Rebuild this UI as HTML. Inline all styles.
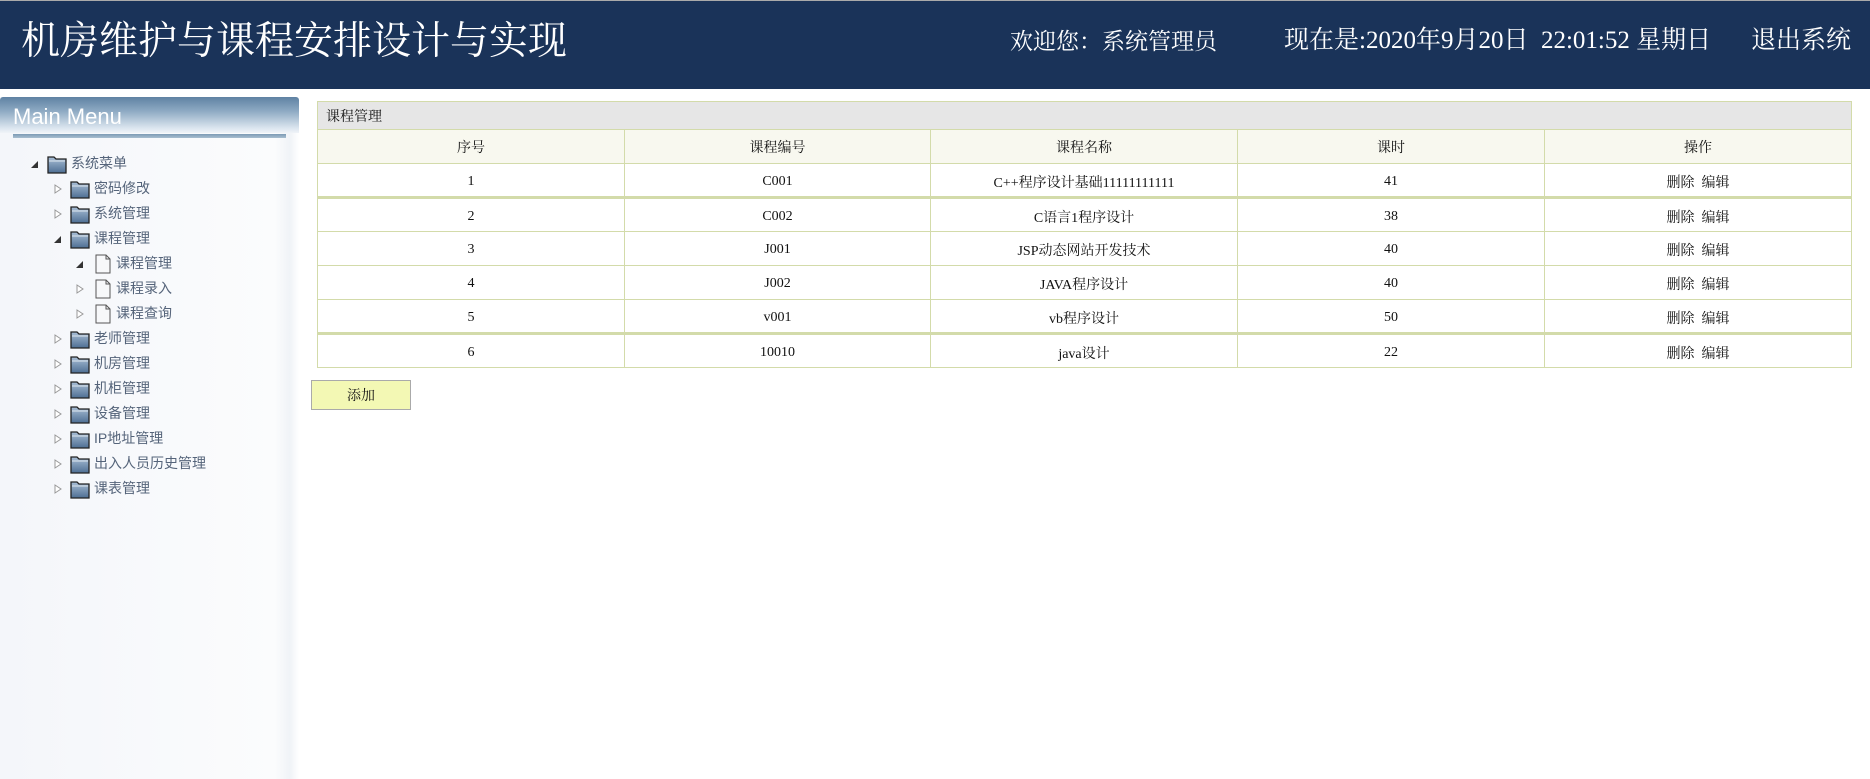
<!DOCTYPE html>
<html><head><meta charset="utf-8">
<style>
*{margin:0;padding:0;box-sizing:border-box}
body{width:1870px;height:779px;overflow:hidden;background:#fff;font-family:"Liberation Serif","Noto Serif CJK SC","Noto Sans CJK SC",serif;position:relative}
#hd{position:absolute;left:0;top:0;width:1870px;height:89px;background:#1a3359;border-top:1px solid #aaa}
#title{position:absolute;left:21px;top:17px;color:#fff;font-size:39px;line-height:48px;white-space:nowrap}
.hr{position:absolute;top:25px;color:#fff;font-size:25px;line-height:30px;white-space:nowrap}
#side{position:absolute;left:0;top:97px;width:299px;height:682px;background:linear-gradient(to right,#f4f6fa 0,#fbfcfd 275px,#f0f3f7 290px,#fff 299px)}
#mm{position:absolute;left:0;top:0;width:299px;height:36px;background:linear-gradient(#5f82a3,#8fabc4 40%,#d9e4ee 85%,#f0f4f8);border-radius:3px 3px 0 0}
#mm span{position:absolute;left:13px;top:7px;color:#fff;font-family:"Liberation Sans",sans-serif;font-size:22px;line-height:26px}
#mmline{position:absolute;left:13px;top:37px;width:273px;height:4px;background:linear-gradient(#7d9ab5,#a9bed0)}
.n{position:absolute;height:22px;font-family:"Liberation Sans","Noto Sans CJK SC",sans-serif;font-size:14px;color:#55647a;white-space:nowrap;line-height:22px}
.n svg{position:absolute;top:2px}
.n .t{position:absolute;top:0}
table{position:absolute;left:317px;top:101px;width:1535px;border-collapse:collapse;font-size:14px;color:#111}
td,th{border:1px solid #d3dbaa;text-align:center;font-weight:normal;height:34px;padding-top:3px}
th.cap{background:#e6e6e6;text-align:left;padding-left:8px;height:28px;padding-top:0}
tr.h td{background:#f8f8ef;padding-top:0}
tr.db td{border-top:3px solid #d3dbaa}
#btn{position:absolute;left:311px;top:380px;width:100px;height:30px;background:#f3f8b4;border:1px solid #aaa;text-align:center;font-size:14px;line-height:31px;color:#111}
</style></head><body>
<div id="hd">
<div id="title">机房维护与课程安排设计与实现</div>
<div class="hr" style="left:1010px;font-size:23px;top:26px">欢迎您：系统管理员</div>
<div class="hr" style="left:1284px">现在是:2020年9月20日&nbsp; 22:01:52 星期日</div>
<div class="hr" style="left:1751px">退出系统</div>
</div>
<div id="side">
<div id="mm"><span>Main Menu</span></div>
<div id="mmline"></div>
</div>
<svg width="0" height="0" style="position:absolute">
<defs>
<linearGradient id="fg" x1="0" y1="0" x2="0" y2="1"><stop offset="0" stop-color="#a9bfd6"/><stop offset="1" stop-color="#4e6f93"/></linearGradient>
<symbol id="fold" viewBox="0 0 20 20"><path d="M1 3h6l2 2h10v14H1z" fill="url(#fg)" stroke="#222" stroke-width="1.3"/><path d="M2 7h16" stroke="#dfe7ef" stroke-width="1"/></symbol>
<symbol id="file" viewBox="0 0 16 20"><path d="M1 1h10l4 4v14H1z" fill="#f7f8fa" stroke="#555" stroke-width="1"/><path d="M11 1v4h4" fill="none" stroke="#555"/></symbol>
<symbol id="op" viewBox="0 0 10 10"><path d="M8 2v7H1z" fill="#333"/></symbol>
<symbol id="cl" viewBox="0 0 10 10"><path d="M2 1l6 4-6 4z" fill="#fff" stroke="#999"/></symbol>
</defs></svg>
<div id="tree">
<div class="n" style="left:30px;top:152px"><svg style="left:0;top:7px" width="10" height="10"><use href="#op"/></svg><svg style="left:17px" width="20" height="20"><use href="#fold"/></svg><span class="t" style="left:41px">系统菜单</span></div>
<div class="n" style="left:53px;top:177px"><svg style="left:0;top:7px" width="10" height="10"><use href="#cl"/></svg><svg style="left:17px" width="20" height="20"><use href="#fold"/></svg><span class="t" style="left:41px">密码修改</span></div>
<div class="n" style="left:53px;top:202px"><svg style="left:0;top:7px" width="10" height="10"><use href="#cl"/></svg><svg style="left:17px" width="20" height="20"><use href="#fold"/></svg><span class="t" style="left:41px">系统管理</span></div>
<div class="n" style="left:53px;top:227px"><svg style="left:0;top:7px" width="10" height="10"><use href="#op"/></svg><svg style="left:17px" width="20" height="20"><use href="#fold"/></svg><span class="t" style="left:41px">课程管理</span></div>
<div class="n" style="left:75px;top:252px"><svg style="left:0;top:7px" width="10" height="10"><use href="#op"/></svg><svg style="left:20px" width="16" height="20"><use href="#file"/></svg><span class="t" style="left:41px">课程管理</span></div>
<div class="n" style="left:75px;top:277px"><svg style="left:0;top:7px" width="10" height="10"><use href="#cl"/></svg><svg style="left:20px" width="16" height="20"><use href="#file"/></svg><span class="t" style="left:41px">课程录入</span></div>
<div class="n" style="left:75px;top:302px"><svg style="left:0;top:7px" width="10" height="10"><use href="#cl"/></svg><svg style="left:20px" width="16" height="20"><use href="#file"/></svg><span class="t" style="left:41px">课程查询</span></div>
<div class="n" style="left:53px;top:327px"><svg style="left:0;top:7px" width="10" height="10"><use href="#cl"/></svg><svg style="left:17px" width="20" height="20"><use href="#fold"/></svg><span class="t" style="left:41px">老师管理</span></div>
<div class="n" style="left:53px;top:352px"><svg style="left:0;top:7px" width="10" height="10"><use href="#cl"/></svg><svg style="left:17px" width="20" height="20"><use href="#fold"/></svg><span class="t" style="left:41px">机房管理</span></div>
<div class="n" style="left:53px;top:377px"><svg style="left:0;top:7px" width="10" height="10"><use href="#cl"/></svg><svg style="left:17px" width="20" height="20"><use href="#fold"/></svg><span class="t" style="left:41px">机柜管理</span></div>
<div class="n" style="left:53px;top:402px"><svg style="left:0;top:7px" width="10" height="10"><use href="#cl"/></svg><svg style="left:17px" width="20" height="20"><use href="#fold"/></svg><span class="t" style="left:41px">设备管理</span></div>
<div class="n" style="left:53px;top:427px"><svg style="left:0;top:7px" width="10" height="10"><use href="#cl"/></svg><svg style="left:17px" width="20" height="20"><use href="#fold"/></svg><span class="t" style="left:41px">IP地址管理</span></div>
<div class="n" style="left:53px;top:452px"><svg style="left:0;top:7px" width="10" height="10"><use href="#cl"/></svg><svg style="left:17px" width="20" height="20"><use href="#fold"/></svg><span class="t" style="left:41px">出入人员历史管理</span></div>
<div class="n" style="left:53px;top:477px"><svg style="left:0;top:7px" width="10" height="10"><use href="#cl"/></svg><svg style="left:17px" width="20" height="20"><use href="#fold"/></svg><span class="t" style="left:41px">课表管理</span></div>
</div>
<table>
<tr><th class="cap" colspan="5">课程管理</th></tr>
<tr class="h"><td style="width:307px">序号</td><td style="width:306px">课程编号</td><td style="width:307px">课程名称</td><td style="width:307px">课时</td><td>操作</td></tr>
<tr><td>1</td><td>C001</td><td>C++程序设计基础11111111111</td><td>41</td><td>删除&nbsp; 编辑</td></tr>
<tr class="db"><td>2</td><td>C002</td><td>C语言1程序设计</td><td>38</td><td>删除&nbsp; 编辑</td></tr>
<tr><td>3</td><td>J001</td><td>JSP动态网站开发技术</td><td>40</td><td>删除&nbsp; 编辑</td></tr>
<tr><td>4</td><td>J002</td><td>JAVA程序设计</td><td>40</td><td>删除&nbsp; 编辑</td></tr>
<tr><td>5</td><td>v001</td><td>vb程序设计</td><td>50</td><td>删除&nbsp; 编辑</td></tr>
<tr class="db"><td>6</td><td>10010</td><td>java设计</td><td>22</td><td>删除&nbsp; 编辑</td></tr>
</table>
<div id="btn">添加</div>
</body></html>
